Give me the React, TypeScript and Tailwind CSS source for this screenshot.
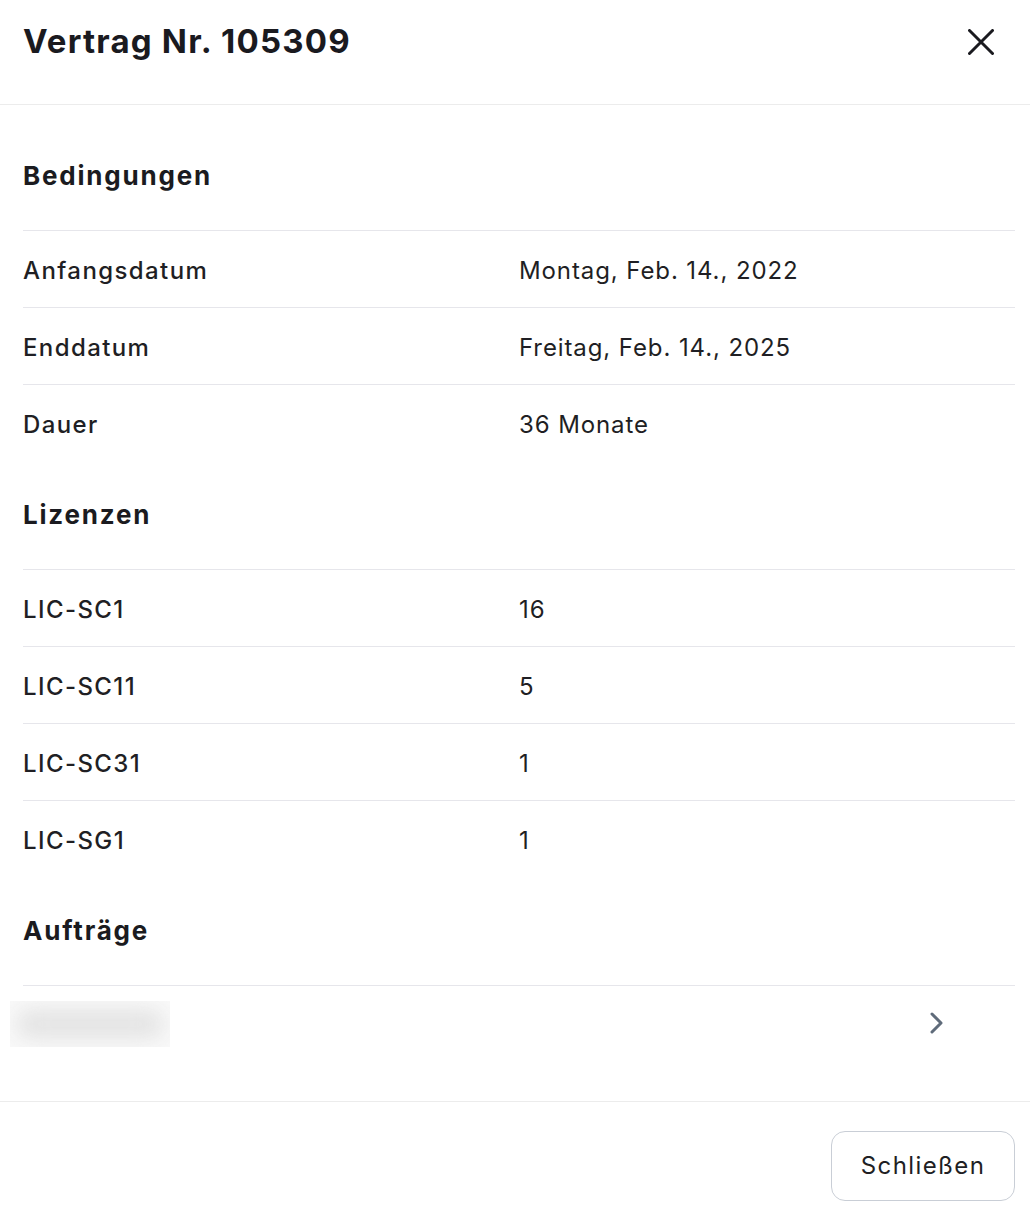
import React from 'react';

// Vertrag detail dialog

type Row = { label: string; value: string };

const terms: Row[] = [
  { label: 'Anfangsdatum', value: 'Montag, Feb. 14., 2022' },
  { label: 'Enddatum', value: 'Freitag, Feb. 14., 2025' },
  { label: 'Dauer', value: '36 Monate' },
];

const licenses: Row[] = [
  { label: 'LIC-SC1', value: '16' },
  { label: 'LIC-SC11', value: '5' },
  { label: 'LIC-SC31', value: '1' },
  { label: 'LIC-SG1', value: '1' },
];

function SectionTitle({ children }: { children: React.ReactNode }) {
  return (
    <h2 className="pt-[38px] pb-[38px] text-[26px] leading-[32px] font-bold tracking-[1.8px] text-[#1b1b20]">
      {children}
    </h2>
  );
}

function DetailRows({ rows }: { rows: Row[] }) {
  return (
    <div>
      {rows.map((row) => (
        <div
          key={row.label}
          className="grid grid-cols-2 h-[77px] pt-[3px] items-center border-t border-[#e6e6eb] text-[24px] text-[#1f1f24]"
        >
          <span className="font-medium tracking-[1.4px]">{row.label}</span>
          <span className="tracking-[0.9px]">{row.value}</span>
        </div>
      ))}
    </div>
  );
}

export default function App() {
  return (
    <div className="w-[1030px] h-[1218px] bg-white flex flex-col font-['Inter',sans-serif] overflow-hidden">
      {/* Header */}
      <div className="h-[105px] flex items-center justify-between pl-[23px] pr-[36px] pb-[21px] border-b border-[#ececec] shrink-0">
        <h1 className="text-[33px] font-bold tracking-[1.2px] text-[#1a1a1f]">Vertrag Nr. 105309</h1>
        <button className="w-[26px] h-[26px] flex items-center justify-center">
          <svg width="26" height="26" viewBox="0 0 26 26" fill="none">
            <path d="M1.5 1.5L24.5 24.5M24.5 1.5L1.5 24.5" stroke="#1a1a1f" strokeWidth="3" strokeLinecap="round" />
          </svg>
        </button>
      </div>

      {/* Body */}
      <div className="flex-1 pt-[17px] pl-[23px] pr-[15px]">
        <SectionTitle>Bedingungen</SectionTitle>
        <DetailRows rows={terms} />

        <SectionTitle>Lizenzen</SectionTitle>
        <DetailRows rows={licenses} />

        <SectionTitle>Aufträge</SectionTitle>
        <div className="h-[77px] border-t border-[#e6e6eb] flex items-center justify-between">
          {/* blurred order number */}
          <div className="-ml-[13px] w-[160px] h-[46px] relative overflow-hidden bg-[#f9f9f9]">
            <div className="absolute left-[6px] top-[8px] w-[148px] h-[30px] rounded-full bg-[#e4e4e4] blur-[10px]" />
          </div>
          <svg className="mr-[70px] mt-[-2px]" width="16" height="24" viewBox="0 0 16 24" fill="none">
            <path d="M3 3L12 12L3 21" stroke="#5f6b7a" strokeWidth="3" strokeLinecap="round" strokeLinejoin="round" />
          </svg>
        </div>
      </div>

      {/* Footer */}
      <div className="h-[117px] border-t border-[#ececec] flex justify-end items-start pt-[29px] pr-[15px] shrink-0">
        <button className="w-[184px] h-[70px] rounded-[14px] border border-[#c9ced6] text-[24px] tracking-[1.4px] text-[#1f1f24] bg-white">
          Schließen
        </button>
      </div>
    </div>
  );
}
